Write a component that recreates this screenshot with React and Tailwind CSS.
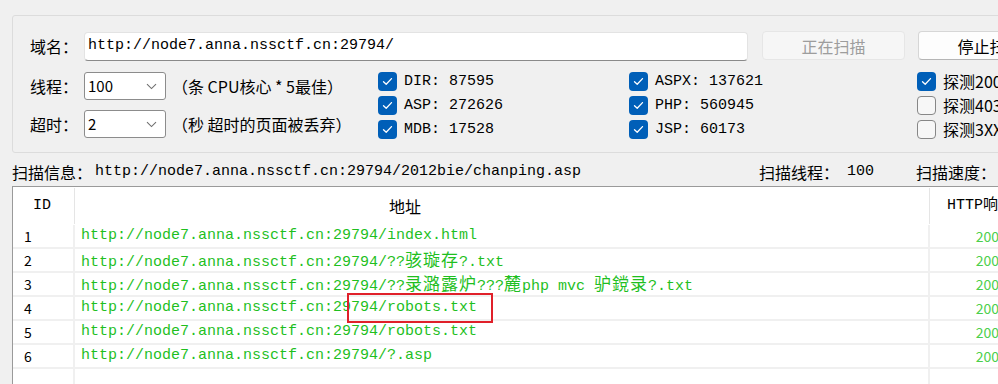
const mono = "font-['Liberation_Mono','Noto_Sans_CJK_SC',monospace]";
const sans = "font-['Noto_Sans_CJK_SC','Noto_Sans',sans-serif]";

function Mixed({ text }) {
  const parts = text.split(/([\u4e00-\u9fff]+)/);
  return (
    <span className="whitespace-pre">
      {parts.map((p, i) =>
        /[\u4e00-\u9fff]/.test(p) ? (
          <span key={i} className="font-['Noto_Sans_CJK_SC',sans-serif] text-[17px] tracking-[1px]">{p}</span>
        ) : (
          <span key={i}>{p}</span>
        )
      )}
    </span>
  );
}

function Check({ on, label, cjk }) {
  return (
    <div className="flex items-center h-[19px]">
      {on ? (
        <div className="w-[19px] h-[19px] shrink-0 rounded-[4px] bg-[#005fb8] flex items-center justify-center">
          <svg width="11" height="9" viewBox="0 0 11 9" fill="none">
            <path d="M1.5 4.8 L4.2 7.3 L9.5 1.6" stroke="white" strokeWidth="1.3" strokeLinecap="round" strokeLinejoin="round" />
          </svg>
        </div>
      ) : (
        <div className="w-[19px] h-[19px] shrink-0 rounded-[4px] bg-[#f7f7f7] border border-[#878787]" />
      )}
      <span className={`ml-[7px] leading-[19px] whitespace-nowrap ${cjk ? `text-[16px] ${sans}` : `text-[15px] ${mono}`}`}>
        {label}
      </span>
    </div>
  );
}

function Select({ value }) {
  return (
    <div className="w-[82px] h-[28px] bg-white border border-[#8c8c8c] rounded-[3px] flex items-center justify-between pl-[3px] pr-[8px]">
      <span className={`text-[15px] ${sans}`}>{value}</span>
      <svg width="11" height="7" viewBox="0 0 11 7" fill="none">
        <path d="M1 1.2 L5.5 5.6 L10 1.2" stroke="#707070" strokeWidth="1.1" />
      </svg>
    </div>
  );
}

const rows = [
  ["1", "http://node7.anna.nssctf.cn:29794/index.html"],
  ["2", "http://node7.anna.nssctf.cn:29794/??骇璇存?.txt"],
  ["3", "http://node7.anna.nssctf.cn:29794/??录潞露炉???麓php mvc 驴鎲录?.txt"],
  ["4", "http://node7.anna.nssctf.cn:29794/robots.txt"],
  ["5", "http://node7.anna.nssctf.cn:29794/robots.txt"],
  ["6", "http://node7.anna.nssctf.cn:29794/?.asp"],
];

export default function App() {
  return (
    <div className="relative w-[998px] h-[384px] overflow-hidden bg-[#f0f0f0] text-black">
      <div className="w-[1200px] pt-[15px] pl-[12px]">
        {/* settings group */}
        <div className="h-[138px] border border-[#dcdcdc] rounded-[3px] pl-[17px] pt-[15px]">
          <div className="flex items-start h-[30px]">
            <span className={`w-[54px] mt-[4px] text-[16px] leading-[22px] ${sans}`}>域名：</span>
            <div className="mt-[1px] w-[664px] h-[29px] bg-white border border-[#e3e3e3] border-b-[#8a8a8a] rounded-[4px] flex items-center pl-[3px]">
              <span className={`text-[15px] ${mono}`}>http://node7.anna.nssctf.cn:29794/</span>
            </div>
            <div className={`ml-[14px] w-[143px] h-[29px] rounded-[4px] bg-[#f6f6f6] border border-[#e6e6e6] flex items-center justify-center text-[16px] text-[#9d9d9d] ${sans}`}>
              正在扫描
            </div>
            <div className={`ml-[13px] w-[143px] h-[29px] rounded-[4px] bg-[#fdfdfd] border border-[#d6d6d6] border-b-[#b5b5b5] flex items-center justify-center text-[16px] ${sans}`}>
              停止扫描
            </div>
          </div>

          <div className="flex mt-[11px]">
            <div className="w-[348px] flex flex-col gap-[10px]">
              <div className="flex items-center h-[28px]">
                <span className={`w-[54px] text-[16px] ${sans}`}>线程：</span>
                <Select value="100" />
                <span className={`ml-[6px] text-[16px] whitespace-nowrap ${sans}`}>（条 CPU核心 * 5最佳）</span>
              </div>
              <div className="flex items-center h-[28px]">
                <span className={`w-[54px] text-[16px] ${sans}`}>超时：</span>
                <Select value="2" />
                <span className={`ml-[6px] text-[16px] whitespace-nowrap ${sans}`}>（秒 超时的页面被丢弃）</span>
              </div>
            </div>
            <div className="w-[251px] flex flex-col gap-[5px]">
              <Check on label="DIR: 87595" />
              <Check on label="ASP: 272626" />
              <Check on label="MDB: 17528" />
            </div>
            <div className="w-[288px] flex flex-col gap-[5px]">
              <Check on label="ASPX: 137621" />
              <Check on label="PHP: 560945" />
              <Check on label="JSP: 60173" />
            </div>
            <div className="flex flex-col gap-[5px]">
              <Check on cjk label="探测200" />
              <Check cjk label="探测403" />
              <Check cjk label="探测3XX" />
            </div>
          </div>
        </div>

        {/* status line */}
        <div className="mt-[9px] h-[20px] flex items-center whitespace-nowrap">
          <div className="w-[747px] flex items-center">
            <span className={`text-[16px] ${sans}`}>扫描信息：</span>
            <span className={`ml-[3px] text-[15px] ${mono}`}>http://node7.anna.nssctf.cn:29794/2012bie/chanping.asp</span>
          </div>
          <div className="w-[157px] flex items-center">
            <span className={`text-[16px] ${sans}`}>扫描线程：</span>
            <span className={`ml-[8px] text-[15px] ${mono}`}>100</span>
          </div>
          <span className={`text-[16px] ${sans}`}>扫描速度：</span>
        </div>

        {/* result table */}
        <div className="mt-[4px] h-[200px] bg-white border-l border-t border-[#9a9a9a]">
          <div className="flex h-[38px]">
            <div className="w-[62px] flex items-center pl-[20px] border-r border-[#e5e5e5] my-[1px]">
              <span className={`text-[15px] ${mono}`}>ID</span>
            </div>
            <div className="w-[855px] flex items-center pl-[314px] border-r border-[#e5e5e5] my-[1px]">
              <span className={`text-[16px] ${sans}`}>地址</span>
            </div>
            <div className="flex items-center pl-[17px]">
              <span className={`text-[15px] whitespace-nowrap ${mono}`}>HTTP响应</span>
            </div>
          </div>
          {rows.map(([id, url]) => (
            <div key={id} className="flex h-[24px] border-b-2 border-[#f0f0f0]">
              <div className={`w-[62px] flex items-center pl-[11px] pt-[1px] border-r-2 border-[#f0f0f0] text-[14px] ${sans}`}>{id}</div>
              <div className={`w-[855px] flex items-center pl-[6px] pt-[1px] border-r-2 border-[#f0f0f0] text-[15px] text-[#1fbf1f] ${mono}`}>
                <Mixed text={url} />
              </div>
              <div className={`w-[69px] flex items-center justify-end pt-[1px] text-[14px] text-[#4ccf4c] ${sans}`}>200</div>
            </div>
          ))}
          <div className="flex h-[30px]">
            <div className="w-[62px] border-r-2 border-[#f0f0f0]" />
            <div className="w-[855px] border-r-2 border-[#f0f0f0]" />
          </div>
        </div>
      </div>

      {/* annotation box */}
      <div className="absolute left-[347px] top-[293px] w-[146px] h-[30px] border-2 border-[#e0202a]" />
    </div>
  );
}
